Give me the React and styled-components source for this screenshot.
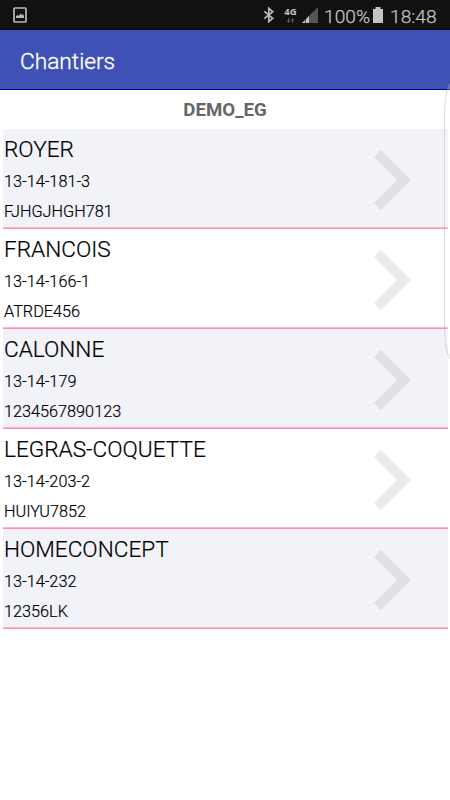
import styled, { createGlobalStyle } from "styled-components";

const sites = [
  { name: "ROYER", number: "13-14-181-3", code: "FJHGJHGH781" },
  { name: "FRANCOIS", number: "13-14-166-1", code: "ATRDE456" },
  { name: "CALONNE", number: "13-14-179", code: "1234567890123" },
  { name: "LEGRAS-COQUETTE", number: "13-14-203-2", code: "HUIYU7852" },
  { name: "HOMECONCEPT", number: "13-14-232", code: "12356LK" },
];

const App = () => {
  return (
    <Screen>
      <GlobalStyle />
      <StatusBar>
        <PictureIcon width="14" height="16" viewBox="0 0 14 16">
          <rect x="1" y="1" width="12" height="14" rx="1" fill="none" stroke="#b9b9b9" strokeWidth="1.7" />
          <path d="M3 11V9l2-1 1 1 1.5-2.5L9 8l1-1 1 2v2z" fill="#b9b9b9" />
        </PictureIcon>
        <Bluetooth width="12" height="16" viewBox="0 0 12 16">
          <path d="M1.3 4.3l8.4 7L5.8 14.7V1.3l3.9 3.4-8.4 7" fill="none" stroke="#b9b9b9" strokeWidth="1.7" />
        </Bluetooth>
        <Network>
          <span>4G</span>
          <svg width="9" height="5" viewBox="0 0 9 5">
            <path d="M2.2 0v2.5H.6L2.6 5l2-2.5H3.2V0zM6 5V2.5H4.9L6.7 0l1.8 2.5H7V5z" fill="#5c5c5c" />
          </svg>
        </Network>
        <Signal width="16" height="16" viewBox="0 0 16 16">
          <path d="M0 16L16 0v16z" fill="#555" />
          <path d="M0 16l3-3v3zM4 16v-4l3-3v7z" fill="#c3c3c3" />
        </Signal>
        <Percent>100%</Percent>
        <Battery width="10" height="16" viewBox="0 0 10 16">
          <path d="M0 2h2.5V0h5v2H10v14H0z" fill="#c3c3c3" />
        </Battery>
        <Clock>18:48</Clock>
      </StatusBar>

      <Toolbar>
        <Title>Chantiers</Title>
      </Toolbar>

      <Company>DEMO_EG</Company>

      <List>
        {sites.map((site, index) => (
          <Row key={site.code} $shaded={index % 2 === 0}>
            <Details>
              <Name>{site.name}</Name>
              <Line>{site.number}</Line>
              <Line>{site.code}</Line>
            </Details>
            <Chevron width="38" height="60" viewBox="0 0 38 60">
              <path d="M7 0l30 30L7 60l-7-7 23-23L0 7z" fill="#000" fillOpacity="0.08" />
            </Chevron>
          </Row>
        ))}
      </List>

      <EdgeHandle width="8" height="284" viewBox="0 0 8 284">
        <path
          d="M8 0C4 9 2.5 18 2.5 34V236C2.5 258 4 268 8 276"
          fill="#fff"
          fillOpacity="0.2"
          stroke="#999"
          strokeOpacity="0.35"
        />
      </EdgeHandle>
    </Screen>
  );
};

const GlobalStyle = createGlobalStyle`
  body {
    margin: 0;
    background: #fff;
    font-family: Roboto, "Liberation Sans", sans-serif;
  }
`;

const Screen = styled.div`
  position: relative;
  width: 450px;
  height: 800px;
  overflow: hidden;
  background: #fff;
`;

const StatusBar = styled.div`
  display: flex;
  align-items: flex-start;
  box-sizing: border-box;
  height: 30px;
  padding: 7px 0 0 13px;
  background: #111;
  border-bottom: 1px solid #080810;
  color: #c3c3c3;
`;

const PictureIcon = styled.svg`
  margin-right: auto;
`;

const Bluetooth = styled.svg`
  margin-right: 9px;
`;

const Network = styled.div`
  display: flex;
  flex-direction: column;
  align-items: center;
  width: 13px;
  margin-right: 5px;
  font-family: "Open Sans", sans-serif;
  font-size: 9.5px;
  font-weight: 700;
  line-height: 10px;

  svg {
    margin-top: 1px;
  }
`;

const Signal = styled.svg`
  margin-right: 6px;
`;

const Percent = styled.div`
  width: 46px;
  margin-right: 3px;
  font-size: 19.2px;
  font-weight: 300;
  line-height: 19px;
  white-space: nowrap;
  -webkit-text-stroke: 0.25px;
`;

const Battery = styled.svg`
  margin-right: 7px;
`;

const Clock = styled.div`
  width: 60px;
  font-size: 19.2px;
  font-weight: 300;
  line-height: 19px;
  -webkit-text-stroke: 0.25px;
`;

const Toolbar = styled.div`
  display: flex;
  align-items: center;
  box-sizing: border-box;
  height: 60px;
  padding-left: 20px;
  background: #3f51b5;
  border-bottom: 1px solid #00009c;
`;

const Title = styled.div`
  padding-top: 4px;
  color: #fff;
  font-size: 22.7px;
  font-weight: 300;
  line-height: 28px;
  -webkit-text-stroke: 0.35px;
`;

const Company = styled.div`
  height: 39px;
  color: #666;
  font-size: 18.7px;
  font-weight: 700;
  line-height: 40px;
  text-align: center;
`;

const List = styled.div`
  margin: 0 2.5px;
`;

const Row = styled.div`
  display: flex;
  align-items: flex-start;
  justify-content: space-between;
  box-sizing: border-box;
  height: 100px;
  padding: 5px 36px 0 1.5px;
  background: ${(props) => (props.$shaded ? "#f2f3f9" : "#fff")};
  box-shadow: inset 0 -1px 0 #ff8fb5, inset 0 -2px 0 #ffb5cf;
`;

const Details = styled.div`
  color: #000;
  font-weight: 300;
  -webkit-text-stroke: 0.2px;
`;

const Name = styled.div`
  height: 32px;
  font-size: 22.6px;
  line-height: 31px;
`;

const Line = styled.div`
  height: 30px;
  font-size: 16.25px;
  line-height: 32px;
`;

const Chevron = styled.svg`
  margin-top: 16px;
`;

/* edge panel handle, drawn over the right side of the list */
const EdgeHandle = styled.svg`
  position: absolute;
  top: 83px;
  right: 0;
`;

export default App;
